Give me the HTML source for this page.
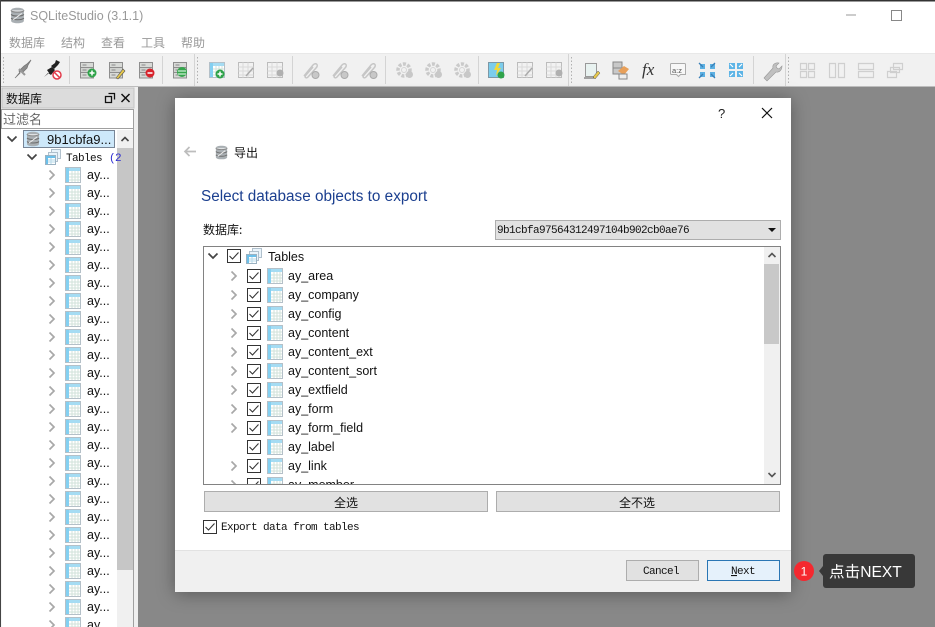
<!DOCTYPE html>
<html><head><meta charset="utf-8"><style>
html,body{margin:0;padding:0;width:935px;height:627px;overflow:hidden;background:#fff}
svg{display:block}
text{font-family:"Liberation Sans","Noto Sans CJK SC",sans-serif;font-size:12px;fill:#111}
.m{font-family:"Liberation Mono","Noto Sans CJK SC",monospace;font-size:11px;letter-spacing:-.6px}
.c{font-family:"Noto Sans CJK SC",sans-serif;font-size:12px}
.g{fill:#999}
.r{font-size:12.5px}
</style></head><body>
<svg width="935" height="627" viewBox="0 0 935 627" xmlns="http://www.w3.org/2000/svg">
<defs>
<symbol id="t" viewBox="0 0 16 16"><rect x=".5" y=".5" width="15" height="15" fill="#fff" stroke="#b4c0c8"/><rect x="1" y="1" width="14" height="3" fill="#a5dcf3"/><rect x="1" y="1" width="3" height="14" fill="#84d0f1"/><path d="M4 7h11M4 10h11M4 13h11M7 4v11M10 4v11M13 4v11" stroke="#d0e2da" fill="none"/></symbol>
<symbol id="ts" viewBox="0 0 16 16"><rect x="6.500" y=".5" width="9" height="9" fill="#eaf4fb" stroke="#b0c0cc"/><rect x="3.500" y="3.500" width="9" height="9" fill="#eaf4fb" stroke="#b0c0cc"/><rect x=".5" y="6.500" width="10" height="9" fill="#fff" stroke="#9ab2c2"/><rect x="1" y="7" width="9" height="2" fill="#6cc0ea"/><rect x="1" y="7" width="2" height="8" fill="#6cc0ea"/><path d="M3 11h7M3 13h7M6 9v6" stroke="#b5d8e8"/></symbol>
<symbol id="db" viewBox="0 0 16 16"><path d="M2 3c0-3 12-3 12 0v10c0 3-12 3-12 0z" fill="#a9afb3"/><path d="M2 3c0 2.500 12 2.500 12 0" fill="#dfe2e4" stroke="#8a8a8a"/><path d="M2 7c2 2 10 2 12 0M2 10.500c2 2 10 2 12 0" stroke="#6c6c6c" fill="none"/><path d="M4 12L12 6" stroke="#eee"/></symbol>
<symbol id="cb" viewBox="0 0 14 14"><rect x=".5" y=".5" width="13" height="13" fill="#fff" stroke="#333"/><path d="M2.500 7l3 3 6-6.500" stroke="#333" stroke-width="1.100" fill="none"/></symbol>
<symbol id="cr" viewBox="0 0 8 12"><path d="M1.500 1.500L6 6l-4.500 4.500" stroke="#a8a8a8" stroke-width="1.700" fill="none"/></symbol>
<symbol id="dn" viewBox="0 0 12 8"><path d="M1.500 1.500L6 6l4.500-4.500" stroke="#444" stroke-width="1.700" fill="none"/></symbol>
<symbol id="srv" viewBox="0 0 24 24"><rect x="3.500" y="2.500" width="13" height="5" fill="#d8dad7" stroke="#8e8e8e"/><rect x="3.500" y="7.500" width="13" height="5" fill="#d0d2cf" stroke="#8e8e8e"/><rect x="3.500" y="12.500" width="13" height="5.500" fill="#d8dad7" stroke="#8e8e8e"/><path d="M5.500 5h4M5.500 10h4M5.500 15h4" stroke="#888"/></symbol>
<symbol id="pg" viewBox="0 0 24 24"><rect x="3.500" y="3.500" width="15" height="15" fill="#f2f2f2" stroke="#bcbcbc"/><path d="M3.500 8h15M3.500 12h15M3.500 16h15M8 3.500v15M13 3.500v15" stroke="#dadada"/></symbol>
<symbol id="cl" viewBox="0 0 24 24"><path d="M5 17L14 6c3-3 6 0 3 3L9 18c-2 2-4 0-2-2l7-8" stroke="#c6c6c6" stroke-width="1.500" fill="none"/><circle cx="16.500" cy="16" r="3.500" fill="#c8c8c8" stroke="#aaa"/></symbol>
<symbol id="gr" viewBox="0 0 24 24"><circle cx="11" cy="11" r="6" fill="none" stroke="#cacaca" stroke-width="3.500" stroke-dasharray="3 1.500"/><circle cx="11" cy="11" r="2.500" fill="none" stroke="#d4d4d4"/><circle cx="16.500" cy="15.500" r="3.500" fill="#c8c8c8"/></symbol>
<clipPath id="cp1"><rect x="204" y="247" width="560" height="237"/></clipPath>
<clipPath id="cp2"><rect x="0" y="130" width="133" height="497"/></clipPath>
<filter id="sh" x="-10%" y="-10%" width="120%" height="120%"><feDropShadow dx="0" dy="2" stdDeviation="9" flood-color="#000" flood-opacity=".35"/></filter>
</defs>

<!-- chrome -->
<rect width="935" height="627" fill="#fff"/>
<rect x="0" y="0" width="935" height="1.500" fill="#333"/>
<rect x="0" y="0" width="1" height="627" fill="#444"/>
<rect x="1" y="54" width="934" height="32" fill="#f1f1f1"/>
<rect x="1" y="53" width="934" height="1" fill="#e8e8e8"/>
<rect x="1" y="86" width="934" height="1.500" fill="#bdbdbd"/>
<rect x="138" y="87" width="797" height="540" fill="#888"/>
<rect x="1" y="87" width="137" height="540" fill="#efefef"/>
<use href="#db" x="9" y="7" width="17" height="17"/>
<text x="30" y="20" class="g" style="font-size:12.500px">SQLiteStudio (3.1.1)</text>
<path d="M846 15h10" stroke="#999"/><rect x="891.500" y="10.500" width="10" height="10" fill="none" stroke="#888"/>
<text x="9" y="47" class="c g">数据库</text><text x="61" y="47" class="c g">结构</text><text x="101" y="47" class="c g">查看</text><text x="141" y="47" class="c g">工具</text><text x="181" y="47" class="c g">帮助</text>

<!-- toolbar separators -->
<path d="M69.500 56v28M162.500 56v28M194.500 54v32M292.500 56v28M385.500 56v28M478.500 56v28M568.500 54v32M753.500 56v28M785.500 54v32" stroke="#d4d4d4"/>
<path d="M3.500 57v27M197.500 57v27M571.500 57v27M788.500 57v27" stroke="#b0b0b0" stroke-dasharray="1.500 2"/>
<!-- toolbar icons -->
<g>
<path d="M15 78l5-5-1-2 4-4 1-1 3-2 4-4-3 5-1 3-4 4-2-1-5 6z" fill="#8c8c8c" stroke="#777" stroke-width=".8"/><path d="M19 69l6 6" stroke="#999" stroke-width="2"/>
<path d="M44 77l5-4-2-3 5-3 3 3-4 5-3-2z" fill="#222"/><path d="M51 66l4-3 1-3 4 2-2 3-4 4z" fill="#222"/><circle cx="57" cy="75" r="4" fill="#fff" stroke="#e23a4a" stroke-width="1.500"/><path d="M54.500 72.500l5 5" stroke="#e23a4a" stroke-width="1.500"/>
<use href="#srv" x="77" y="60" width="24" height="24"/><circle cx="92" cy="73" r="4.500" fill="#2fa34a"/><path d="M89.500 73h5M92 70.500v5" stroke="#fff" stroke-width="1.500"/>
<use href="#srv" x="106" y="60" width="24" height="24"/><path d="M116 78l7-9 2 2-7 8z" fill="#e6c84c" stroke="#555" stroke-width=".6"/>
<use href="#srv" x="136" y="60" width="24" height="24"/><circle cx="150" cy="73" r="4.500" fill="#d8232c"/><path d="M147.500 73h5" stroke="#fff" stroke-width="1.500"/>
<use href="#srv" x="170" y="60" width="24" height="24"/><circle cx="182" cy="72" r="5" fill="#35a64c"/><path d="M178 71h8M178 74h8" stroke="#cfeed5" stroke-width="1.200"/>
<use href="#t" x="209" y="62" width="16" height="16"/><circle cx="220" cy="74" r="4.500" fill="#2fa34a"/><path d="M217.500 74h5M220 71.500v5" stroke="#fff" stroke-width="1.500"/>
<use href="#pg" x="235" y="59" width="24" height="24"/><path d="M246 76l7-8" stroke="#aaa" stroke-width="1.500"/><use href="#pg" x="264" y="59" width="24" height="24"/><circle cx="280" cy="73" r="3.500" fill="#b0b0b0"/>
<use href="#cl" x="299" y="59" width="24" height="24"/><use href="#cl" x="328" y="59" width="24" height="24"/><use href="#cl" x="357" y="59" width="24" height="24"/>
<use href="#gr" x="393" y="59" width="24" height="24"/><use href="#gr" x="422" y="59" width="24" height="24"/><use href="#gr" x="451" y="59" width="24" height="24"/>
<rect x="488.500" y="62.500" width="15" height="15" fill="#7ccdec" stroke="#7d98a6"/><path d="M497 63l-3 7h3l-1 6 5-8h-3l2-5z" fill="#f2d93a"/><circle cx="501" cy="75" r="3.500" fill="#2fa34a"/>
<use href="#pg" x="514" y="59" width="24" height="24"/><path d="M525 76l7-8" stroke="#aaa" stroke-width="1.500"/><use href="#pg" x="543" y="59" width="24" height="24"/><circle cx="559" cy="73" r="3.500" fill="#b0b0b0"/>
<path d="M585.500 63.500h11v13h-11z" fill="#e8f2f0" stroke="#999"/><path d="M584 78h12" stroke="#555"/><path d="M593 77l5-6 2 2-5 6z" fill="#e6c84c" stroke="#555" stroke-width=".5"/>
<rect x="613" y="62" width="9" height="6" fill="#c8c8c8" stroke="#888"/><rect x="613" y="68" width="9" height="6" fill="#c8c8c8" stroke="#888"/><path d="M618 71l6-5 5 3-5 6z" fill="#e8a05a"/><rect x="619" y="74" width="8" height="5" fill="#eee" stroke="#888"/>
<text x="642" y="75" style="font-family:'Liberation Serif',serif;font-style:italic;font-size:17px;fill:#333">fx</text>
<path d="M671.500 63.500h13a1 1 0 0 1 1 1v10h-5l-2 2-2-2h-5a1 1 0 0 1-1-1v-9a1 1 0 0 1 1-1z" fill="#f7f7f7" stroke="#aaa"/><text x="672" y="73" style="font-size:7.500px;fill:#555">a:z</text>
<path d="M700 64h5v5h-5zM710 64h5v5h-5zM700 72h5v5h-5zM710 72h5v5h-5z" fill="#5cb0e2"/><path d="M699 63l4 4M715 63l-4 4M699 78l4-4M715 78l-4-4" stroke="#3a80b8" stroke-width="1.300"/>
<path d="M729 63h6v6h-6zM737 63h6v6h-6zM729 71h6v6h-6zM737 71h6v6h-6z" fill="#5db4e6"/><path d="M733 67l-3-3M739 67l3-3M733 73l-3 3M739 73l3 3" stroke="#fff" stroke-width="1.200"/>
<path d="M764 78l9-10c-1-3 2-6 6-5l-3 3 1 2 2 1 3-3c0 4-3 7-6 6l-9 9z" fill="#c0c0c0" stroke="#999" stroke-width=".6"/>
<path d="M800.500 63.500h6v6h-6zM808.500 63.500h6v6h-6zM800.500 71.500h6v6h-6zM808.500 71.500h6v6h-6z" fill="none" stroke="#cfcfcf" stroke-width="1.200"/>
<path d="M829.500 63.500h6v14h-6zM838.500 63.500h6v14h-6z" fill="none" stroke="#cfcfcf" stroke-width="1.200"/>
<path d="M858.500 63.500h15v6h-15zM858.500 71.500h15v6h-15z" fill="none" stroke="#cfcfcf" stroke-width="1.200"/>
<path d="M893.500 63.500h9v6h-9zM890.500 67.500h9v5h-9zM887.500 71.500h9v6h-9z" fill="#f1f1f1" stroke="#cfcfcf" stroke-width="1.200"/>
</g>

<!-- left dock -->
<rect x="2" y="88" width="132" height="20" fill="#dcdcdc" stroke="#c4c4c4"/>
<text x="6" y="103" class="c">数据库</text>
<path d="M108.500 93.500h6v6M105.500 96.500h6v6h-6z" fill="none" stroke="#111" stroke-width="1.300"/>
<path d="M121.500 94l8 8M129.500 94l-8 8" stroke="#111" stroke-width="1.500"/>
<rect x="1.500" y="109.500" width="132" height="19" fill="#fff" stroke="#a0a0a0"/>
<text x="3" y="124" class="c" style="fill:#666;font-size:13px">过滤名</text>
<rect x="1.500" y="129" width="132" height="498" fill="#fff"/>
<path d="M133.500 129v498" stroke="#a0a0a0"/>
<rect x="117" y="130" width="16" height="497" fill="#f0f0f0"/>
<rect x="117" y="148" width="16" height="422" fill="#c6c6c6"/>
<path d="M121.500 141l3.500-3.500 3.500 3.500" stroke="#444" stroke-width="1.600" fill="none"/>
<rect x="23" y="130" width="92" height="18" fill="#cde8fa"/><rect x="23.500" y="130.500" width="91" height="17" fill="none" stroke="#223" stroke-dasharray="1 1"/>
<use href="#db" x="25" y="131" width="16" height="16"/>
<text x="47" y="144" style="font-size:13px">9b1cbfa9...</text>
<use href="#dn" x="6" y="135" width="12" height="8"/>
<use href="#dn" x="26" y="153" width="12" height="8"/>
<use href="#ts" x="45" y="149" width="16" height="16"/>
<text x="66" y="161" class="m">Tables</text><text x="109" y="161" class="m" style="fill:#2a2ad0">(2</text>
<g clip-path="url(#cp2)">
<g id="srow"><use href="#cr" x="48" y="169" width="8" height="12"/><use href="#t" x="65" y="167" width="16" height="16"/><text x="87" y="179" class="r">ay...</text></g>
<use href="#srow" y="18"/><use href="#srow" y="36"/><use href="#srow" y="54"/><use href="#srow" y="72"/><use href="#srow" y="90"/><use href="#srow" y="108"/><use href="#srow" y="126"/><use href="#srow" y="144"/><use href="#srow" y="162"/><use href="#srow" y="180"/><use href="#srow" y="198"/><use href="#srow" y="216"/><use href="#srow" y="234"/><use href="#srow" y="252"/><use href="#srow" y="270"/><use href="#srow" y="288"/><use href="#srow" y="306"/><use href="#srow" y="324"/><use href="#srow" y="342"/><use href="#srow" y="360"/><use href="#srow" y="378"/><use href="#srow" y="396"/><use href="#srow" y="414"/><use href="#srow" y="432"/><use href="#srow" y="450"/>
</g>

<!-- dialog -->
<rect x="175" y="98" width="616" height="494" fill="#fff" filter="url(#sh)"/>
<rect x="175" y="550" width="616" height="42" fill="#f0f0f0"/>
<path d="M175 550.500h616" stroke="#e2e2e2"/>
<text x="718" y="118" style="font-size:13px;fill:#222">?</text>
<path d="M762 108l10 10M772 108l-10 10" stroke="#111" stroke-width="1.200"/>
<path d="M185 151.500h11M189.500 147l-4.500 4.500 4.500 4.500" stroke="#bdbdbd" stroke-width="1.700" fill="none"/>
<use href="#db" x="214" y="145" width="15" height="15"/>
<text x="234" y="157" class="c">导出</text>
<text x="201" y="201" style="font-size:15.300px;fill:#1b3f8f">Select database objects to export</text>
<text x="203" y="234" class="c">数据库:</text>
<rect x="495.500" y="220.500" width="285" height="19" fill="#e1e1e1" stroke="#adadad"/>
<text x="497" y="233" class="m">9b1cbfa97564312497104b902cb0ae76</text>
<path d="M768 228h8l-4 4z" fill="#111"/>

<rect x="203.500" y="246.500" width="577" height="238" fill="#fff" stroke="#828282"/>
<rect x="764" y="247" width="16" height="237" fill="#f0f0f0"/>
<rect x="764" y="264" width="15" height="80" fill="#c8c8c8"/>
<path d="M768.500 257l3.500-3.500 3.500 3.500" stroke="#555" stroke-width="1.600" fill="none"/>
<path d="M768.500 473l3.500 3.500 3.500-3.500" stroke="#555" stroke-width="1.600" fill="none"/>

<use href="#dn" x="207" y="252" width="12" height="8"/>
<use href="#cb" x="227" y="249" width="14" height="14"/>
<use href="#ts" x="246" y="248" width="16" height="16"/>
<text x="268" y="261" style="font-size:12.500px">Tables</text>
<g clip-path="url(#cp1)">
<g id="dr"><use href="#cr" x="230" y="270" width="8" height="12"/></g>
<use href="#dr" y="19"/><use href="#dr" y="38"/><use href="#dr" y="57"/><use href="#dr" y="76"/><use href="#dr" y="95"/><use href="#dr" y="114"/><use href="#dr" y="133"/><use href="#dr" y="152"/><use href="#dr" y="190"/><use href="#dr" y="209"/>
<g id="dk"><use href="#cb" x="247" y="269" width="14" height="14"/><use href="#t" x="267" y="268" width="16" height="16"/></g>
<use href="#dk" y="19"/><use href="#dk" y="38"/><use href="#dk" y="57"/><use href="#dk" y="76"/><use href="#dk" y="95"/><use href="#dk" y="114"/><use href="#dk" y="133"/><use href="#dk" y="152"/><use href="#dk" y="171"/><use href="#dk" y="190"/><use href="#dk" y="209"/>
<text x="288" y="280" class="r">ay_area</text>
<text x="288" y="299" class="r">ay_company</text>
<text x="288" y="318" class="r">ay_config</text>
<text x="288" y="337" class="r">ay_content</text>
<text x="288" y="356" class="r">ay_content_ext</text>
<text x="288" y="375" class="r">ay_content_sort</text>
<text x="288" y="394" class="r">ay_extfield</text>
<text x="288" y="413" class="r">ay_form</text>
<text x="288" y="432" class="r">ay_form_field</text>
<text x="288" y="451" class="r">ay_label</text>
<text x="288" y="470" class="r">ay_link</text>
<text x="288" y="489" class="r">ay_member</text>
</g>

<rect x="204.500" y="491.500" width="283" height="20" fill="#e1e1e1" stroke="#adadad"/>
<text x="334" y="507" class="c">全选</text>
<rect x="496.500" y="491.500" width="283" height="20" fill="#e1e1e1" stroke="#adadad"/>
<text x="619" y="507" class="c">全不选</text>
<use href="#cb" x="203" y="520" width="14" height="14"/>
<text x="221" y="530" class="m">Export data from tables</text>

<rect x="626.500" y="560.500" width="72" height="20" fill="#e1e1e1" stroke="#adadad"/>
<text x="643" y="574" class="m">Cancel</text>
<rect x="707.500" y="560.500" width="72" height="20" fill="#e5f1fb" stroke="#2a76b4"/>
<text x="731" y="574" class="m" text-decoration="underline">N</text><text x="737" y="574" class="m">ext</text>

<!-- annotation -->
<circle cx="804" cy="571" r="10" fill="#f5282f"/>
<text x="804" y="575.500" text-anchor="middle" style="fill:#fff;font-size:12px">1</text>
<rect x="823" y="554" width="92" height="34" rx="3" fill="#383838"/>
<path d="M823 566l-4 5 4 5z" fill="#383838"/>
<text x="829" y="577" style="fill:#fff;font-size:15.600px">点击NEXT</text>
</svg>
</body></html>
